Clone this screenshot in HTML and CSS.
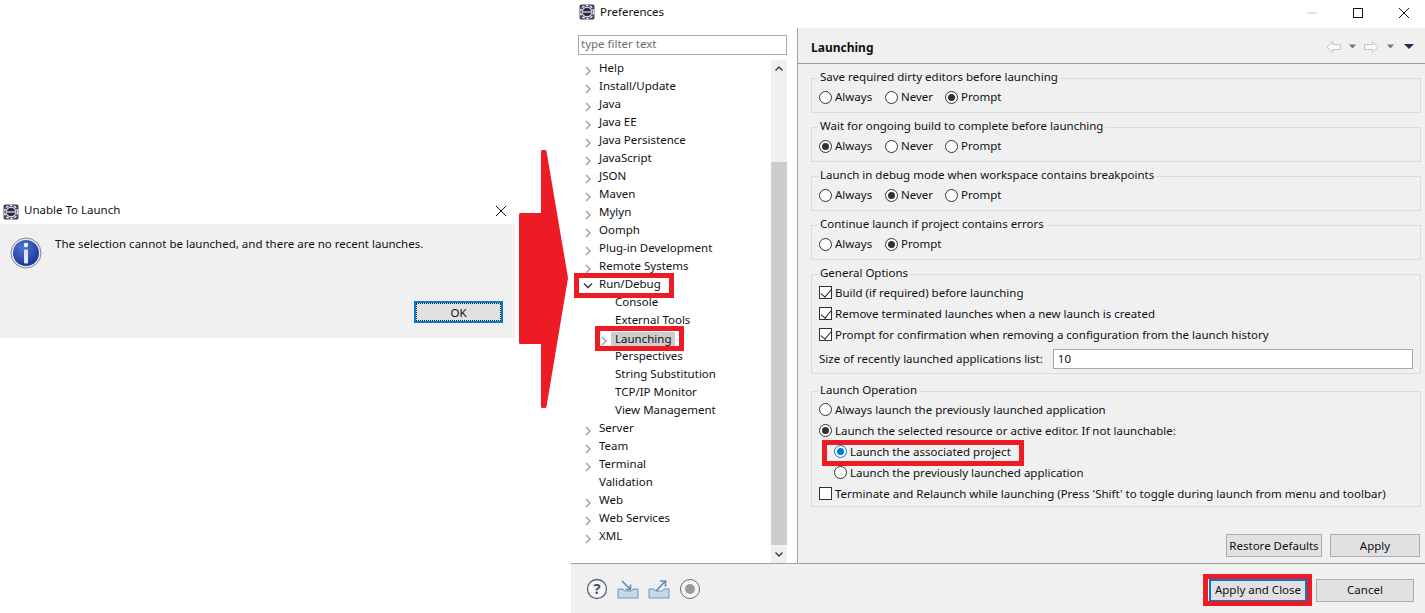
FILE: index.html
```html
<!DOCTYPE html>
<html lang="en">
<head>
<meta charset="utf-8">
<title>Preferences</title>
<link rel="stylesheet" href="styles.css">
</head>
<body>
<svg width="0" height="0" class="defs">
  <defs>
    <symbol id="eclipse" viewBox="0 0 16 16">
      <rect x="0.500" y="0.500" width="15" height="15" rx="1.500" fill="#4a4366"/>
      <circle cx="8" cy="8" r="6.500" fill="#4a4366" stroke="#f4f3f8" stroke-width="1.500" stroke-dasharray="2.500 1.600"/>
      <circle cx="8" cy="8" r="5.200" fill="#efeef4"/>
      <circle cx="8" cy="8" r="4.300" fill="#2e2842"/>
      <rect x="3.700" y="7.200" width="8.600" height="1.600" fill="#bdbbcc"/>
    </symbol>
    <symbol id="chev-r" viewBox="0 0 10 14"><path d="M3 5 7 9 3 13" fill="none" stroke="#a6a6a6" stroke-width="1.600"/></symbol>
    <symbol id="chev-d" viewBox="0 0 10 14"><path d="M1 5.500 5 9.500 9 5.500" fill="none" stroke="#444" stroke-width="1.600"/></symbol>
  </defs>
</svg>

<section class="dialog">
  <header class="titlebar dialog-title">
    <svg class="app-icon"><use href="#eclipse"/></svg>
    <span class="title-text">Unable To Launch</span>
    <svg class="win-x" viewBox="0 0 12 12"><path d="M1 1 11 11M11 1 1 11" stroke="#111" stroke-width="1" fill="none"/></svg>
  </header>
  <div class="dialog-body">
    <div class="dialog-msg">
      <svg class="info-icon" viewBox="0 0 32 32">
        <defs>
          <radialGradient id="infoG" cx="0.4" cy="0.3" r="0.8"><stop offset="0" stop-color="#4f78d6"/><stop offset="1" stop-color="#142a8e"/></radialGradient>
        </defs>
        <circle cx="16" cy="16" r="15" fill="#e6eaf2" stroke="#7d8698" stroke-width="1"/>
        <circle cx="16" cy="16" r="13" fill="url(#infoG)"/>
        <circle cx="16" cy="8" r="2.200" fill="#fff"/>
        <rect x="14" y="12.500" width="4" height="14" rx="1" fill="#dfe6f6"/>
      </svg>
      <p class="msg-text">The selection cannot be launched, and there are no recent launches.</p>
    </div>
    <div class="dialog-actions"><button class="btn btn-ok">OK</button></div>
  </div>
</section>

<svg class="big-arrow" viewBox="0 0 60 270" aria-hidden="true">
  <path d="M24.500 5.500H27L48.500 132 27 260.500H24.500V196.500H2.500V68.500H24.500Z" fill="#ed1c24" stroke="#ed1c24" stroke-width="3" stroke-linejoin="round"/>
</svg>

<section class="prefs">
  <header class="titlebar prefs-title">
    <svg class="app-icon"><use href="#eclipse"/></svg>
    <span class="title-text">Preferences</span>
    <div class="win-controls">
      <svg class="win-btn" viewBox="0 0 12 12"><path d="M1 6H11" stroke="#c4c4c4"/></svg>
      <svg class="win-btn" viewBox="0 0 12 12"><rect x="1.500" y="1.500" width="9" height="9" fill="none" stroke="#111"/></svg>
      <svg class="win-btn" viewBox="0 0 12 12"><path d="M1 1 11 11M11 1 1 11" stroke="#111" fill="none"/></svg>
    </div>
  </header>

  <div class="prefs-main">
    <aside class="nav">
      <div class="filter">type filter text</div>
      <div class="tree-wrap">
        <ul class="tree">
          <li class="row"><svg class="chev"><use href="#chev-r"/></svg>Help</li>
          <li class="row"><svg class="chev"><use href="#chev-r"/></svg>Install/Update</li>
          <li class="row"><svg class="chev"><use href="#chev-r"/></svg>Java</li>
          <li class="row"><svg class="chev"><use href="#chev-r"/></svg>Java EE</li>
          <li class="row"><svg class="chev"><use href="#chev-r"/></svg>Java Persistence</li>
          <li class="row"><svg class="chev"><use href="#chev-r"/></svg>JavaScript</li>
          <li class="row"><svg class="chev"><use href="#chev-r"/></svg>JSON</li>
          <li class="row"><svg class="chev"><use href="#chev-r"/></svg>Maven</li>
          <li class="row"><svg class="chev"><use href="#chev-r"/></svg>Mylyn</li>
          <li class="row"><svg class="chev"><use href="#chev-r"/></svg>Oomph</li>
          <li class="row"><svg class="chev"><use href="#chev-r"/></svg>Plug-in Development</li>
          <li class="row"><svg class="chev"><use href="#chev-r"/></svg>Remote Systems</li>
          <li class="row"><svg class="chev"><use href="#chev-d"/></svg>Run/Debug</li>
          <li class="row sub">Console</li>
          <li class="row sub">External Tools</li>
          <li class="row sub has-chev"><svg class="chev"><use href="#chev-r"/></svg><span class="selected">Launching</span></li>
          <li class="row sub">Perspectives</li>
          <li class="row sub">String Substitution</li>
          <li class="row sub">TCP/IP Monitor</li>
          <li class="row sub">View Management</li>
          <li class="row"><svg class="chev"><use href="#chev-r"/></svg>Server</li>
          <li class="row"><svg class="chev"><use href="#chev-r"/></svg>Team</li>
          <li class="row"><svg class="chev"><use href="#chev-r"/></svg>Terminal</li>
          <li class="row leaf">Validation</li>
          <li class="row"><svg class="chev"><use href="#chev-r"/></svg>Web</li>
          <li class="row"><svg class="chev"><use href="#chev-r"/></svg>Web Services</li>
          <li class="row"><svg class="chev"><use href="#chev-r"/></svg>XML</li>
        </ul>
        <div class="scrollbar">
          <svg class="sb-arrow" viewBox="0 0 10 10"><path d="M1.500 6.500 5 3 8.500 6.500" fill="none" stroke="#444" stroke-width="1.500"/></svg>
          <div class="sb-track"><div class="sb-thumb"></div></div>
          <svg class="sb-arrow" viewBox="0 0 10 10"><path d="M1.500 3.500 5 7 8.500 3.500" fill="none" stroke="#444" stroke-width="1.500"/></svg>
        </div>
      </div>
    </aside>

    <main class="page">
      <header class="page-head">
        <h1 class="page-title">Launching</h1>
        <div class="page-nav">
          <svg class="nav-arrow" viewBox="0 0 15 12"><path d="M0.800 6 6.500 0.800V3.500H14.500V8.500H6.500V11.200Z" fill="#fafafa" stroke="#c4c4c4"/></svg>
          <svg class="nav-tri" viewBox="0 0 7 5"><path d="M0 0.500H7L3.500 4.500Z" fill="#777"/></svg>
          <svg class="nav-arrow" viewBox="0 0 15 12"><path d="M14.200 6 8.500 0.800V3.500H0.500V8.500H8.500V11.200Z" fill="#fafafa" stroke="#c4c4c4"/></svg>
          <svg class="nav-tri" viewBox="0 0 7 5"><path d="M0 0.500H7L3.500 4.500Z" fill="#777"/></svg>
          <svg class="nav-tri dark" viewBox="0 0 10 5"><path d="M0 0H10L5 5Z" fill="#32264e"/></svg>
        </div>
      </header>

      <div class="page-content">
        <fieldset class="group g-short">
          <legend>Save required dirty editors before launching</legend>
          <div class="opts"><span class="opt"><i class="radio"></i>Always</span><span class="opt"><i class="radio"></i>Never</span><span class="opt"><i class="radio on"></i>Prompt</span></div>
        </fieldset>
        <fieldset class="group g-short">
          <legend>Wait for ongoing build to complete before launching</legend>
          <div class="opts"><span class="opt"><i class="radio on"></i>Always</span><span class="opt"><i class="radio"></i>Never</span><span class="opt"><i class="radio"></i>Prompt</span></div>
        </fieldset>
        <fieldset class="group g-short">
          <legend>Launch in debug mode when workspace contains breakpoints</legend>
          <div class="opts"><span class="opt"><i class="radio"></i>Always</span><span class="opt"><i class="radio on"></i>Never</span><span class="opt"><i class="radio"></i>Prompt</span></div>
        </fieldset>
        <fieldset class="group g-short">
          <legend>Continue launch if project contains errors</legend>
          <div class="opts"><span class="opt"><i class="radio"></i>Always</span><span class="opt"><i class="radio on"></i>Prompt</span></div>
        </fieldset>
        <fieldset class="group g-general">
          <legend>General Options</legend>
          <div class="line"><i class="check on"></i>Build (if required) before launching</div>
          <div class="line"><i class="check on"></i>Remove terminated launches when a new launch is created</div>
          <div class="line"><i class="check on"></i>Prompt for confirmation when removing a configuration from the launch history</div>
          <div class="line size-line"><label class="size-label">Size of recently launched applications list:</label><div class="size-input">10</div></div>
        </fieldset>
        <fieldset class="group g-op">
          <legend>Launch Operation</legend>
          <div class="line"><i class="radio"></i>Always launch the previously launched application</div>
          <div class="line"><i class="radio on"></i>Launch the selected resource or active editor. If not launchable:</div>
          <div class="line indent"><i class="radio focus"></i>Launch the associated project</div>
          <div class="line indent"><i class="radio"></i>Launch the previously launched application</div>
          <div class="line"><i class="check"></i>Terminate and Relaunch while launching (Press 'Shift' to toggle during launch from menu and toolbar)</div>
        </fieldset>
        <div class="page-actions">
          <button class="btn btn-restore">Restore Defaults</button>
          <button class="btn btn-apply">Apply</button>
        </div>
      </div>
    </main>
  </div>

  <footer class="prefs-foot">
    <div class="foot-icons">
      <svg class="foot-icon" viewBox="0 0 22 22"><circle cx="11" cy="11" r="9.500" fill="#f7f7f9" stroke="#5b6478" stroke-width="1.300"/><text x="11" y="16" class="help-q">?</text></svg>
      <svg class="foot-icon" viewBox="0 0 22 22"><path d="M1 11H6L7.500 13H14.500L16 11H21V20H1Z" fill="#c5d7ea" stroke="#6f98bf"/><path d="M5 3 13 11M13.500 6.500V11.500H8.500" fill="none" stroke="#5b8cb8" stroke-width="1.600"/></svg>
      <svg class="foot-icon" viewBox="0 0 22 22"><path d="M1 11H6L7.500 13H14.500L16 11H21V20H1Z" fill="#c5d7ea" stroke="#6f98bf"/><path d="M8 13 17 3.500M12 3H17.500V8.500" fill="none" stroke="#5b8cb8" stroke-width="1.600"/></svg>
      <svg class="foot-icon" viewBox="0 0 22 22"><circle cx="11" cy="11" r="9.500" fill="#f4f4f4" stroke="#6b6b6b"/><circle cx="11" cy="11" r="5" fill="#9a9a9a"/></svg>
    </div>
    <div class="foot-actions">
      <button class="btn btn-default">Apply and Close</button>
      <button class="btn btn-cancel">Cancel</button>
    </div>
  </footer>
</section>

<div class="mark mark-run"></div>
<div class="mark mark-launching"></div>
<div class="mark mark-project"></div>
<div class="mark mark-apply"></div>
</body>
</html>
```
FILE: styles.css
```css
* { box-sizing: border-box; }
html, body { margin: 0; padding: 0; }
body {
  width: 1425px;
  height: 613px;
  position: relative;
  overflow: hidden;
  background: #fff;
  color: #111;
  font-family: "Noto Sans", "Noto Sans CJK KR", sans-serif;
  font-size: 11.5px;
  line-height: 16px;
}
.defs { position: absolute; }

.titlebar { display: flex; align-items: center; height: 28px; background: #fff; }
.app-icon { width: 16px; height: 16px; flex: none; }
.title-text { margin-left: 5px; }

/* dialog */
.dialog { position: absolute; left: 0; top: 196px; width: 515px; }
.dialog-title { padding-left: 3px; }
.dialog-title .app-icon { margin-top: 3px; }
.win-x { width: 12px; height: 12px; margin-left: auto; margin-right: 8px; margin-top: 2px; }
.dialog-body { height: 114px; background: #f0f0f0; display: flex; flex-direction: column; }
.dialog-msg { display: flex; padding: 13px 0 0 10px; flex: 1; }
.info-icon { width: 32px; height: 32px; flex: none; }
.msg-text { margin: -1px 0 0 13px; }
.dialog-actions { display: flex; justify-content: flex-end; padding: 0 12px 15px 0; }

.btn {
  font: inherit;
  color: #111;
  background: #e1e1e1;
  border: 1px solid #adadad;
  padding: 0;
  height: 23px;
}
.btn-ok { width: 89px; height: 22px; padding-top: 1px; border: 2px solid #0a78c8; outline: 1px dotted #222; outline-offset: -3px; }

.big-arrow { position: absolute; left: 518px; top: 146px; width: 60px; height: 270px; }

/* preferences window */
.prefs { position: absolute; left: 571px; top: 0; width: 854px; height: 613px; display: flex; flex-direction: column; }
.prefs-title { padding: 0 0 4px 8px; flex: none; }
.win-controls { display: flex; margin-left: auto; gap: 34px; padding-right: 15px; margin-top: 2px; }
.win-btn { width: 12px; height: 12px; }
.prefs-main { flex: 1; display: flex; min-height: 0; }

.nav { width: 227px; flex: none; background: #fff; border-right: 1px solid #a0a0a0; padding: 7px 10px 0 7px; display: flex; flex-direction: column; }
.filter { height: 20px; border: 1px solid #a9a9a9; padding: 0 2px; color: #6d6d6d; background: #fff; flex: none; }
.tree-wrap { flex: 1; display: flex; margin-top: 5px; min-height: 0; }
.tree { list-style: none; margin: -1px 0 0; padding: 0; flex: 1; }
.row { height: 18px; line-height: 18px; display: flex; align-items: center; padding-left: 5px; white-space: nowrap; }
.row.leaf { padding-left: 21px; }
.row.sub { padding-left: 37px; }
.row.sub.has-chev { padding-left: 21px; }
.chev { width: 10px; height: 14px; margin: 2px 6px 0 0; flex: none; }
.has-chev .chev { margin-right: 2px; }
.selected { background: #cdcdcd; display: block; margin-top: 3px; padding: 0 4px 2px; width: 64px; height: 15px; line-height: 13px; }

.scrollbar { width: 16px; flex: none; background: #f0f0f0; display: flex; flex-direction: column; }
.sb-arrow { width: 16px; height: 18px; flex: none; padding: 4px 3px; }
.sb-track { flex: 1; padding-top: 84px; }
.sb-thumb { height: 383px; background: #cdcdcd; }

.page { flex: 1; background: #f0f0f0; min-width: 0; display: flex; flex-direction: column; }
.page-head { height: 36px; border-bottom: 1px solid #a0a0a0; display: flex; align-items: center; padding: 2px 11px 0 13px; flex: none; }
.page-title { font-size: 12px; font-weight: 700; margin: 0; padding-top: 2px; }
.page-nav { margin-left: auto; display: flex; align-items: center; gap: 8px; }
.nav-arrow { width: 15px; height: 12px; }
.nav-tri { width: 7px; height: 5px; }
.nav-tri.dark { width: 10px; margin-left: 2px; }

.page-content { flex: 1; padding: 7px 4px 0 13px; display: flex; flex-direction: column; }
.group { border: 1px solid #dcdcdc; margin: 0 0 7px; padding: 0 7px; min-width: 0; }
.group legend { padding: 0 2px; margin-left: -1px; height: 15px; line-height: 12px; }
.g-short { height: 42px; }
.g-general { height: 107px; margin-bottom: 10px; }
.g-op { height: 123px; }

.opts { display: flex; height: 18px; align-items: center; margin-top: 2px; }
.opt { display: flex; align-items: center; width: 60px; flex: none; }
.opt:first-child { width: 66px; }
.radio, .check { display: inline-block; width: 13px; height: 13px; background: #fff; border: 1px solid #333; flex: none; margin-right: 3px; }
.radio { border-radius: 50%; position: relative; }
.radio.on::after, .radio.focus::after { content: ""; position: absolute; left: 2px; top: 2px; width: 7px; height: 7px; border-radius: 50%; background: #333; }
.radio.focus { border-color: #0078d7; }
.radio.focus::after { background: #0078d7; }
.check.on { background: #fff; position: relative; }
.check.on::after { content: ""; position: absolute; left: 3px; top: 0; width: 5px; height: 9px; border: solid #222; border-width: 0 1.500px 1.500px 0; transform: rotate(40deg); }

.line { display: flex; align-items: center; height: 21px; white-space: nowrap; }
.indent { padding-left: 15px; }
.size-line { height: 22px; margin-top: 3px; }
.size-label { margin-right: 10px; }
.size-input { flex: 1; height: 20px; border: 1px solid #a9a9a9; background: #fff; padding: 1px 4px; }

.page-actions { display: flex; justify-content: flex-end; gap: 8px; margin-top: 20px; padding-right: 1px; }
.btn-restore { width: 96px; }
.btn-apply { width: 90px; }

.prefs-foot { height: 50px; background: #f0f0f0; border-top: 1px solid #a0a0a0; flex: none; display: flex; align-items: center; padding: 0 11px 0 15px; }
.foot-icons { display: flex; gap: 9px; }
.foot-icon { width: 22px; height: 22px; }
.help-q { font-size: 15px; font-weight: 700; fill: #4a5266; text-anchor: middle; }
.foot-actions { margin-left: auto; display: flex; gap: 9px; padding-top: 3px; }
.btn-default { width: 98px; border: 2px solid #0a78c8; }
.btn-cancel { width: 98px; }

/* red annotations */
.mark { position: absolute; border: 5px solid #ed1c24; }
.mark-run { left: 574px; top: 273px; width: 100px; height: 25px; }
.mark-launching { left: 595px; top: 326px; width: 89px; height: 25px; }
.mark-project { left: 822px; top: 440px; width: 202px; height: 26px; }
.mark-apply { left: 1203px; top: 574px; width: 109px; height: 32px; }
```
